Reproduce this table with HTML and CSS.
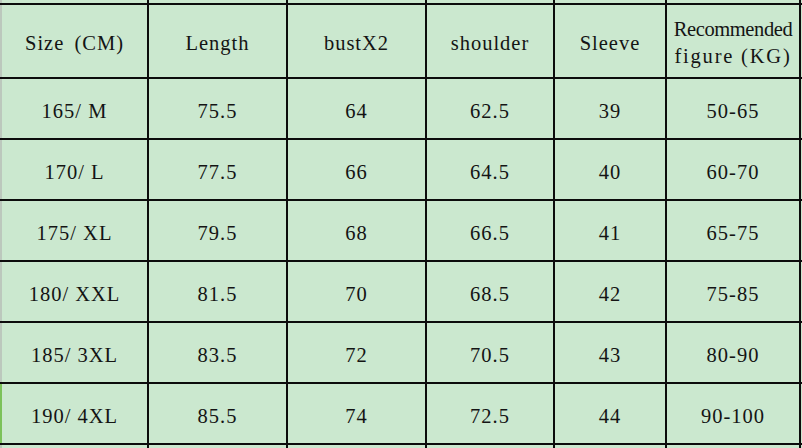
FILE: index.html
```html
<!DOCTYPE html>
<html>
<head>
<meta charset="utf-8">
<link rel="stylesheet" href="styles.css">
</head>
<body>
<table class="size-table">
  <colgroup>
    <col class="c1"><col class="c2"><col class="c3"><col class="c4"><col class="c5"><col class="c6"><col class="c7">
  </colgroup>
  <tr class="stub-top"><td></td><td></td><td></td><td></td><td></td><td></td><td class="edge"></td></tr>
  <tr class="head">
    <td class="wide">Size (CM)</td><td>Length</td><td>bustX2</td><td>shoulder</td><td>Sleeve</td><td class="two">Recommended<br><span class="line2">figure (KG)</span></td><td class="edge"></td>
  </tr>
  <tr class="row"><td>165/ M</td><td>75.5</td><td>64</td><td>62.5</td><td>39</td><td>50-65</td><td class="edge"></td></tr>
  <tr class="row"><td>170/ L</td><td>77.5</td><td>66</td><td>64.5</td><td>40</td><td>60-70</td><td class="edge"></td></tr>
  <tr class="row"><td>175/ XL</td><td>79.5</td><td>68</td><td>66.5</td><td>41</td><td>65-75</td><td class="edge"></td></tr>
  <tr class="row"><td>180/ XXL</td><td>81.5</td><td>70</td><td>68.5</td><td>42</td><td>75-85</td><td class="edge"></td></tr>
  <tr class="row"><td>185/ 3XL</td><td>83.5</td><td>72</td><td>70.5</td><td>43</td><td>80-90</td><td class="edge"></td></tr>
  <tr class="row last"><td>190/ 4XL</td><td>85.5</td><td>74</td><td>72.5</td><td>44</td><td>90-100</td><td class="edge"></td></tr>
  <tr class="stub-bottom"><td></td><td></td><td></td><td></td><td></td><td></td><td class="edge"></td></tr>
</table>
</body>
</html>
```
FILE: styles.css
```css
html, body {
  margin: 0;
  padding: 0;
  background: #cbe8cf;
  overflow: hidden;
}

.size-table {
  border-collapse: collapse;
  table-layout: fixed;
  width: 802px;
  font-family: "Liberation Serif", "Times New Roman", serif;
  font-size: 20.5px;
  line-height: 20px;
  letter-spacing: 1px;
  color: #141414;
  background: #cbe8cf;
}

.c1 { width: 147px; }
.c2 { width: 139px; }
.c3 { width: 139px; }
.c4 { width: 128px; }
.c5 { width: 112px; }
.c6 { width: 134px; }
.c7 { width: 3px; }

.size-table td {
  border: 2px solid #0c0c0c;
  text-align: center;
  vertical-align: middle;
  padding: 0;
  white-space: nowrap;
}

.size-table td:first-child {
  border-left: 2px solid #bcc8bd;
}

.size-table tr.last td:first-child {
  border-left-color: #7cc25a;
}

.size-table td.edge {
  border-right: none;
}

.stub-top td {
  border-top: none;
  height: 3px;
}

.stub-bottom td {
  border-bottom: none;
  height: 4px;
}

.head td {
  height: 68px;
  padding-top: 4px;
}

.head td.wide {
  word-spacing: 4px;
}

.head td.two {
  line-height: 27px;
  letter-spacing: -0.4px;
  height: 69px;
  padding-top: 3px;
}

.head td.two .line2 {
  letter-spacing: 1.8px;
}

.row td {
  height: 54px;
  padding-top: 5px;
}
```
